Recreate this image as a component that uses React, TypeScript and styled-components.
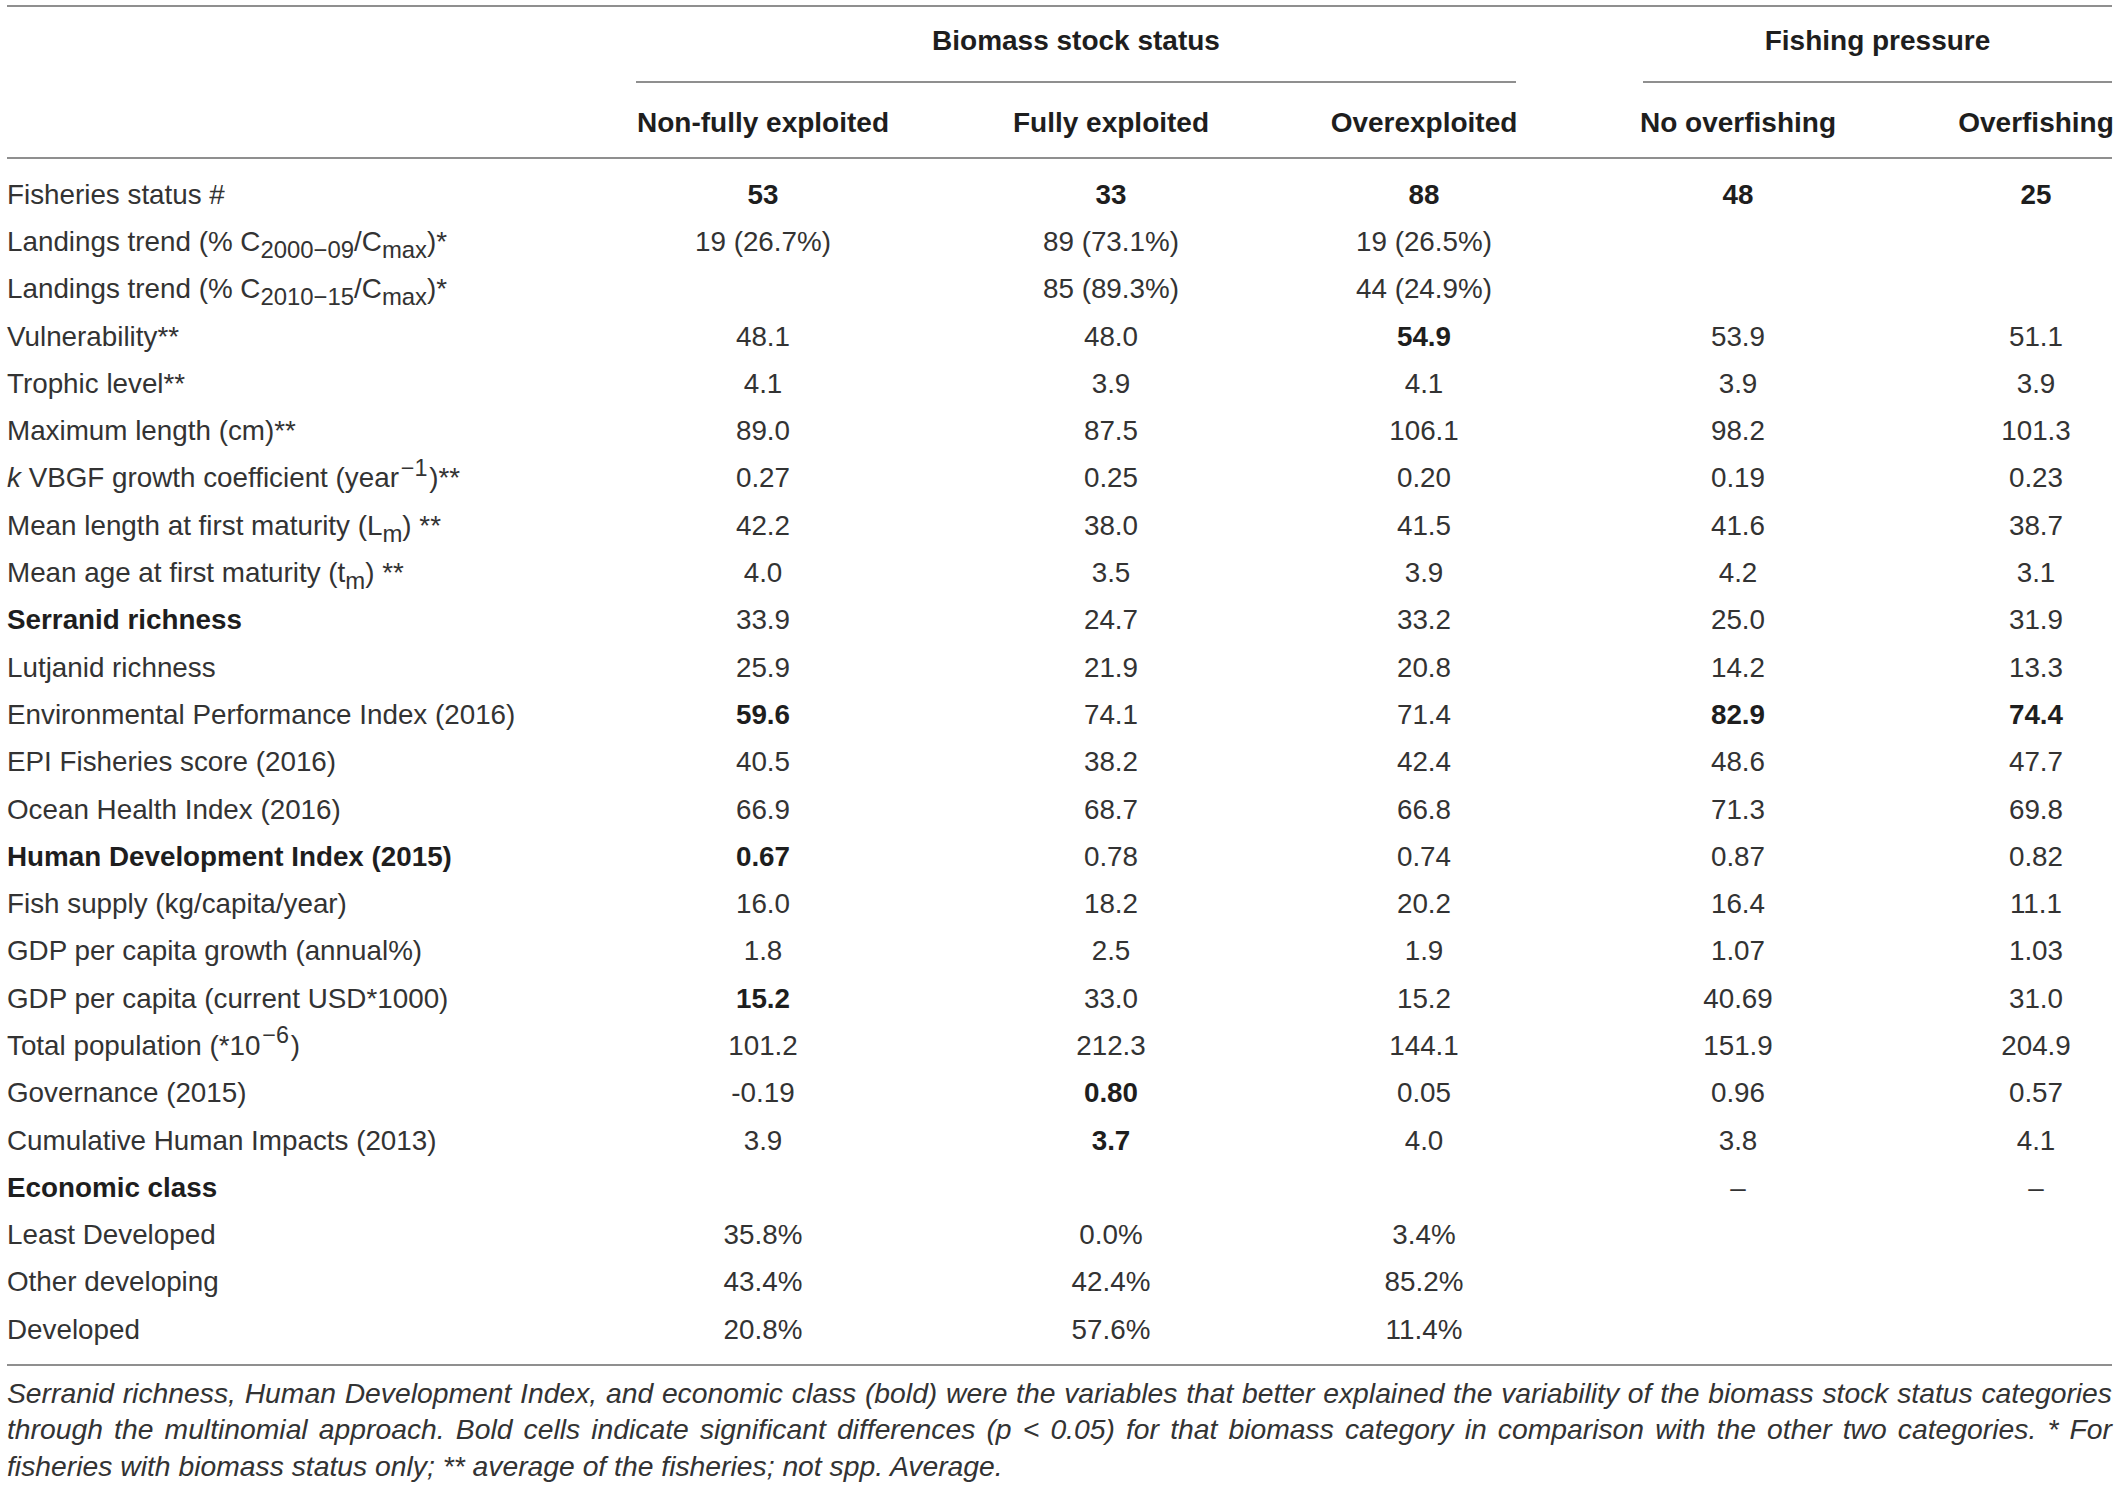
import React from "react";
import styled, { createGlobalStyle } from "styled-components";

const GlobalStyle = createGlobalStyle`
  html, body { margin: 0; padding: 0; background: #ffffff; }
  body {
    font-family: "Liberation Sans", Arial, Helvetica, sans-serif;
    color: #333333;
  }
`;

const COLS = "629px 254px 442px 184px 444px 152px";
const RULE = "2px solid #8f8f8f";

const Page = styled.div`
  width: 2105px;
  padding: 5px 9px 0 7px;
`;

const TableFrame = styled.div`
  border-top: ${RULE};
  border-bottom: ${RULE};
`;

const Header = styled.div`
  display: grid;
  grid-template-columns: ${COLS};
  border-bottom: ${RULE};
  font-weight: 700;
  font-size: 28px;
  color: #1e1e1e;
`;

const GroupHead = styled.div<{ $col: number; $span: number; $inset?: number }>`
  grid-row: 1;
  grid-column: ${(p) => p.$col} / span ${(p) => p.$span};
  margin-left: ${(p) => p.$inset ?? 0}px;
  height: 68px;
  line-height: 68px;
  padding-bottom: 6px;
  border-bottom: ${RULE};
  text-align: center;
  white-space: nowrap;
`;

const SubHead = styled.div<{ $col: number }>`
  grid-row: 2;
  grid-column: ${(p) => p.$col};
  display: flex;
  justify-content: center;
  height: 56px;
  line-height: 56px;
  padding: 12px 0 6px;
  white-space: nowrap;
`;

const Body = styled.div`
  padding: 12px 0 10.5px;
`;

const Row = styled.div`
  display: grid;
  grid-template-columns: ${COLS};
  height: 47.3px;
  align-items: center;
  font-size: 27.8px;
`;

const LabelCell = styled.div<{ $bold?: boolean }>`
  white-space: nowrap;
  font-weight: ${(p) => (p.$bold ? 700 : 400)};
  color: ${(p) => (p.$bold ? "#1e1e1e" : "#333333")};
`;

const ValueCell = styled.div<{ $bold?: boolean }>`
  display: flex;
  justify-content: center;
  white-space: nowrap;
  font-weight: ${(p) => (p.$bold ? 700 : 400)};
  color: ${(p) => (p.$bold ? "#1e1e1e" : "#333333")};
`;

const Sub = styled.sub`
  font-size: 0.86em;
  vertical-align: -0.3em;
  line-height: 0;
`;

const Sup = styled.sup`
  font-size: 0.84em;
  vertical-align: 0.5em;
  line-height: 0;
  padding: 0 0.08em;
`;

const Ital = styled.i`
  font-style: italic;
`;

const Footnote = styled.div`
  padding-top: 8.75px;
  font-style: italic;
  font-size: 28.3px;
  line-height: 36.5px;
  color: #333333;
`;

const FootLine = styled.div<{ $full?: boolean }>`
  text-align: justify;
  text-align-last: ${(p) => (p.$full ? "justify" : "left")};
`;

type Cell = { v: string; b?: boolean } | null;
type RowData = { label: React.ReactNode; bold?: boolean; cells: Cell[] };

const c = (v: string, b = false): Cell => ({ v, b });

const rows: RowData[] = [
  { label: "Fisheries status #", cells: [c("53", true), c("33", true), c("88", true), c("48", true), c("25", true)] },
  {
    label: (
      <>
        Landings trend (% C<Sub>2000−09</Sub>/C<Sub>max</Sub>)*
      </>
    ),
    cells: [c("19 (26.7%)"), c("89 (73.1%)"), c("19 (26.5%)"), null, null],
  },
  {
    label: (
      <>
        Landings trend (% C<Sub>2010−15</Sub>/C<Sub>max</Sub>)*
      </>
    ),
    cells: [null, c("85 (89.3%)"), c("44 (24.9%)"), null, null],
  },
  { label: "Vulnerability**", cells: [c("48.1"), c("48.0"), c("54.9", true), c("53.9"), c("51.1")] },
  { label: "Trophic level**", cells: [c("4.1"), c("3.9"), c("4.1"), c("3.9"), c("3.9")] },
  { label: "Maximum length (cm)**", cells: [c("89.0"), c("87.5"), c("106.1"), c("98.2"), c("101.3")] },
  {
    label: (
      <>
        <Ital>k</Ital> VBGF growth coefficient (year<Sup>−1</Sup>)**
      </>
    ),
    cells: [c("0.27"), c("0.25"), c("0.20"), c("0.19"), c("0.23")],
  },
  {
    label: (
      <>
        Mean length at first maturity (L<Sub>m</Sub>) **
      </>
    ),
    cells: [c("42.2"), c("38.0"), c("41.5"), c("41.6"), c("38.7")],
  },
  {
    label: (
      <>
        Mean age at first maturity (t<Sub>m</Sub>) **
      </>
    ),
    cells: [c("4.0"), c("3.5"), c("3.9"), c("4.2"), c("3.1")],
  },
  { label: "Serranid richness", bold: true, cells: [c("33.9"), c("24.7"), c("33.2"), c("25.0"), c("31.9")] },
  { label: "Lutjanid richness", cells: [c("25.9"), c("21.9"), c("20.8"), c("14.2"), c("13.3")] },
  {
    label: "Environmental Performance Index (2016)",
    cells: [c("59.6", true), c("74.1"), c("71.4"), c("82.9", true), c("74.4", true)],
  },
  { label: "EPI Fisheries score (2016)", cells: [c("40.5"), c("38.2"), c("42.4"), c("48.6"), c("47.7")] },
  { label: "Ocean Health Index (2016)", cells: [c("66.9"), c("68.7"), c("66.8"), c("71.3"), c("69.8")] },
  {
    label: "Human Development Index (2015)",
    bold: true,
    cells: [c("0.67", true), c("0.78"), c("0.74"), c("0.87"), c("0.82")],
  },
  { label: "Fish supply (kg/capita/year)", cells: [c("16.0"), c("18.2"), c("20.2"), c("16.4"), c("11.1")] },
  { label: "GDP per capita growth (annual%)", cells: [c("1.8"), c("2.5"), c("1.9"), c("1.07"), c("1.03")] },
  {
    label: "GDP per capita (current USD*1000)",
    cells: [c("15.2", true), c("33.0"), c("15.2"), c("40.69"), c("31.0")],
  },
  {
    label: (
      <>
        Total population (*10<Sup>−6</Sup>)
      </>
    ),
    cells: [c("101.2"), c("212.3"), c("144.1"), c("151.9"), c("204.9")],
  },
  { label: "Governance (2015)", cells: [c("-0.19"), c("0.80", true), c("0.05"), c("0.96"), c("0.57")] },
  {
    label: "Cumulative Human Impacts (2013)",
    cells: [c("3.9"), c("3.7", true), c("4.0"), c("3.8"), c("4.1")],
  },
  { label: "Economic class", bold: true, cells: [null, null, null, c("–"), c("–")] },
  { label: "Least Developed", cells: [c("35.8%"), c("0.0%"), c("3.4%"), null, null] },
  { label: "Other developing", cells: [c("43.4%"), c("42.4%"), c("85.2%"), null, null] },
  { label: "Developed", cells: [c("20.8%"), c("57.6%"), c("11.4%"), null, null] },
];

const subHeads = ["Non-fully exploited", "Fully exploited", "Overexploited", "No overfishing", "Overfishing"];

export default function App() {
  return (
    <>
      <GlobalStyle />
      <Page>
        <TableFrame>
          <Header>
            <GroupHead $col={2} $span={3}>
              Biomass stock status
            </GroupHead>
            <GroupHead $col={5} $span={2} $inset={127}>
              Fishing pressure
            </GroupHead>
            {subHeads.map((h, i) => (
              <SubHead key={h} $col={i + 2}>
                {h}
              </SubHead>
            ))}
          </Header>
          <Body>
            {rows.map((r, i) => (
              <Row key={i}>
                <LabelCell $bold={r.bold}>{r.label}</LabelCell>
                {r.cells.map((cell, j) => (
                  <ValueCell key={j} $bold={cell?.b}>
                    {cell ? cell.v : ""}
                  </ValueCell>
                ))}
              </Row>
            ))}
          </Body>
        </TableFrame>
        <Footnote>
          <FootLine $full>
            Serranid richness, Human Development Index, and economic class (bold) were the variables that better
            explained the variability of the biomass stock status categories
          </FootLine>
          <FootLine $full>
            through the multinomial approach. Bold cells indicate significant differences (<Ital>p</Ital> &lt; 0.05) for
            that biomass category in comparison with the other two categories. * For
          </FootLine>
          <FootLine>fisheries with biomass status only; ** average of the fisheries; not spp. Average.</FootLine>
        </Footnote>
      </Page>
    </>
  );
}
